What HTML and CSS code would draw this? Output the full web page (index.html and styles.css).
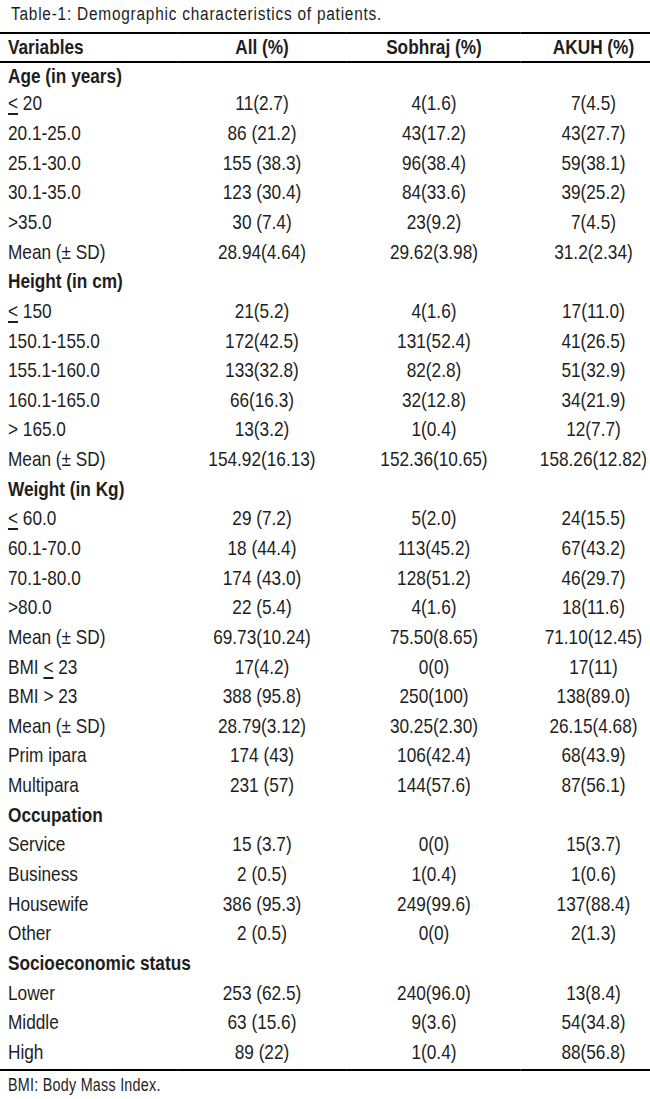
FILE: index.html
```html
<!DOCTYPE html>
<html>
<head>
<meta charset="utf-8">
<link rel="stylesheet" href="styles.css">
</head>
<body>
<div class="frame">
<div class="page">
  <div class="title">Table-1: Demographic characteristics of patients.</div>
  <table class="tbl">
    <colgroup>
      <col class="c1"><col class="c2"><col class="c3"><col class="c4">
    </colgroup>
    <thead>
      <tr><th class="var">Variables</th><th>All (%)</th><th>Sobhraj (%)</th><th class="last">AKUH (%)</th></tr>
    </thead>
    <tbody>
      <tr class="grp first"><td class="var" colspan="4">Age (in years)</td></tr>
      <tr><td class="var"><span class="le">&lt;</span> 20</td><td>11(2.7)</td><td>4(1.6)</td><td class="last">7(4.5)</td></tr>
      <tr><td class="var">20.1-25.0</td><td>86 (21.2)</td><td>43(17.2)</td><td class="last">43(27.7)</td></tr>
      <tr><td class="var">25.1-30.0</td><td>155 (38.3)</td><td>96(38.4)</td><td class="last">59(38.1)</td></tr>
      <tr><td class="var">30.1-35.0</td><td>123 (30.4)</td><td>84(33.6)</td><td class="last">39(25.2)</td></tr>
      <tr><td class="var">&gt;35.0</td><td>30 (7.4)</td><td>23(9.2)</td><td class="last">7(4.5)</td></tr>
      <tr><td class="var">Mean (± SD)</td><td>28.94(4.64)</td><td>29.62(3.98)</td><td class="last">31.2(2.34)</td></tr>
      <tr class="grp"><td class="var" colspan="4">Height (in cm)</td></tr>
      <tr><td class="var"><span class="le">&lt;</span> 150</td><td>21(5.2)</td><td>4(1.6)</td><td class="last">17(11.0)</td></tr>
      <tr><td class="var">150.1-155.0</td><td>172(42.5)</td><td>131(52.4)</td><td class="last">41(26.5)</td></tr>
      <tr><td class="var">155.1-160.0</td><td>133(32.8)</td><td>82(2.8)</td><td class="last">51(32.9)</td></tr>
      <tr><td class="var">160.1-165.0</td><td>66(16.3)</td><td>32(12.8)</td><td class="last">34(21.9)</td></tr>
      <tr><td class="var">&gt; 165.0</td><td>13(3.2)</td><td>1(0.4)</td><td class="last">12(7.7)</td></tr>
      <tr><td class="var">Mean (± SD)</td><td>154.92(16.13)</td><td>152.36(10.65)</td><td class="last">158.26(12.82)</td></tr>
      <tr class="grp"><td class="var" colspan="4">Weight (in Kg)</td></tr>
      <tr><td class="var"><span class="le">&lt;</span> 60.0</td><td>29 (7.2)</td><td>5(2.0)</td><td class="last">24(15.5)</td></tr>
      <tr><td class="var">60.1-70.0</td><td>18 (44.4)</td><td>113(45.2)</td><td class="last">67(43.2)</td></tr>
      <tr><td class="var">70.1-80.0</td><td>174 (43.0)</td><td>128(51.2)</td><td class="last">46(29.7)</td></tr>
      <tr><td class="var">&gt;80.0</td><td>22 (5.4)</td><td>4(1.6)</td><td class="last">18(11.6)</td></tr>
      <tr><td class="var">Mean (± SD)</td><td>69.73(10.24)</td><td>75.50(8.65)</td><td class="last">71.10(12.45)</td></tr>
      <tr><td class="var">BMI <span class="le">&lt;</span> 23</td><td>17(4.2)</td><td>0(0)</td><td class="last">17(11)</td></tr>
      <tr><td class="var">BMI &gt; 23</td><td>388 (95.8)</td><td>250(100)</td><td class="last">138(89.0)</td></tr>
      <tr><td class="var">Mean (± SD)</td><td>28.79(3.12)</td><td>30.25(2.30)</td><td class="last">26.15(4.68)</td></tr>
      <tr><td class="var">Prim ipara</td><td>174 (43)</td><td>106(42.4)</td><td class="last">68(43.9)</td></tr>
      <tr><td class="var">Multipara</td><td>231 (57)</td><td>144(57.6)</td><td class="last">87(56.1)</td></tr>
      <tr class="grp"><td class="var" colspan="4">Occupation</td></tr>
      <tr><td class="var">Service</td><td>15 (3.7)</td><td>0(0)</td><td class="last">15(3.7)</td></tr>
      <tr><td class="var">Business</td><td>2 (0.5)</td><td>1(0.4)</td><td class="last">1(0.6)</td></tr>
      <tr><td class="var">Housewife</td><td>386 (95.3)</td><td>249(99.6)</td><td class="last">137(88.4)</td></tr>
      <tr><td class="var">Other</td><td>2 (0.5)</td><td>0(0)</td><td class="last">2(1.3)</td></tr>
      <tr class="grp"><td class="var" colspan="4">Socioeconomic status</td></tr>
      <tr><td class="var">Lower</td><td>253 (62.5)</td><td>240(96.0)</td><td class="last">13(8.4)</td></tr>
      <tr><td class="var">Middle</td><td>63 (15.6)</td><td>9(3.6)</td><td class="last">54(34.8)</td></tr>
      <tr class="end"><td class="var">High</td><td>89 (22)</td><td>1(0.4)</td><td class="last">88(56.8)</td></tr>
    </tbody>
  </table>
  <div class="foot">BMI: Body Mass Index.</div>
</div>
</div>
</body>
</html>
```
FILE: styles.css
```css
html, body {
  margin: 0;
  padding: 0;
  background: #ffffff;
  overflow: hidden;
}
.frame {
  width: 650px;
  overflow: hidden;
}
/* The reference uses a condensed face; Liberation Sans is narrowed horizontally
   (factor 0.82, the width of Arial Narrow). All horizontal sizes below are in
   unscaled units (= screen px / 0.82). */
.page {
  width: 792.68px;
  margin-right: -142.68px;
  transform: scaleX(0.82);
  transform-origin: 0 0;
  color: #1e1e1e;
  font-family: "Liberation Sans", Arial, sans-serif;
}
.title {
  height: 31.7px;
  box-sizing: border-box;
  padding: 3px 0 0 13.4px;
  font-size: 18.8px;
  line-height: 22px;
  letter-spacing: 0.95px;
  white-space: nowrap;
}
.tbl {
  width: 792.68px;
  border-collapse: collapse;
  table-layout: fixed;
  font-size: 21px;
}
.c1 { width: 215.85px; }
.c2 { width: 207.3px; }
.c3 { width: 212.2px; }
.c4 { width: 157.33px; }
.tbl th, .tbl td {
  padding: 0;
  text-align: center;
  white-space: nowrap;
  vertical-align: middle;
}
.tbl th {
  font-weight: bold;
  height: 27.3px;
  line-height: 22px;
}
.tbl thead tr {
  border-top: 2px solid #000;
  border-bottom: 2px solid #000;
}
.tbl td {
  height: 29.65px;
  line-height: 22px;
}
.tbl .var {
  text-align: left;
  padding-left: 9.76px;
}
.tbl .last {
  padding-left: 19.5px;
}
.grp td {
  font-weight: bold;
}
.first td {
  height: 25.6px;
}
.end td {
  height: 29.65px;
  padding-bottom: 2px;
}
.end {
  border-bottom: 2px solid #000;
}
.le {
  text-decoration: underline;
  text-underline-offset: 3px;
  text-decoration-thickness: 1.5px;
}
.foot {
  padding: 2px 0 0 9.76px;
  font-size: 17.5px;
  line-height: 24px;
  letter-spacing: 0.3px;
}
```
